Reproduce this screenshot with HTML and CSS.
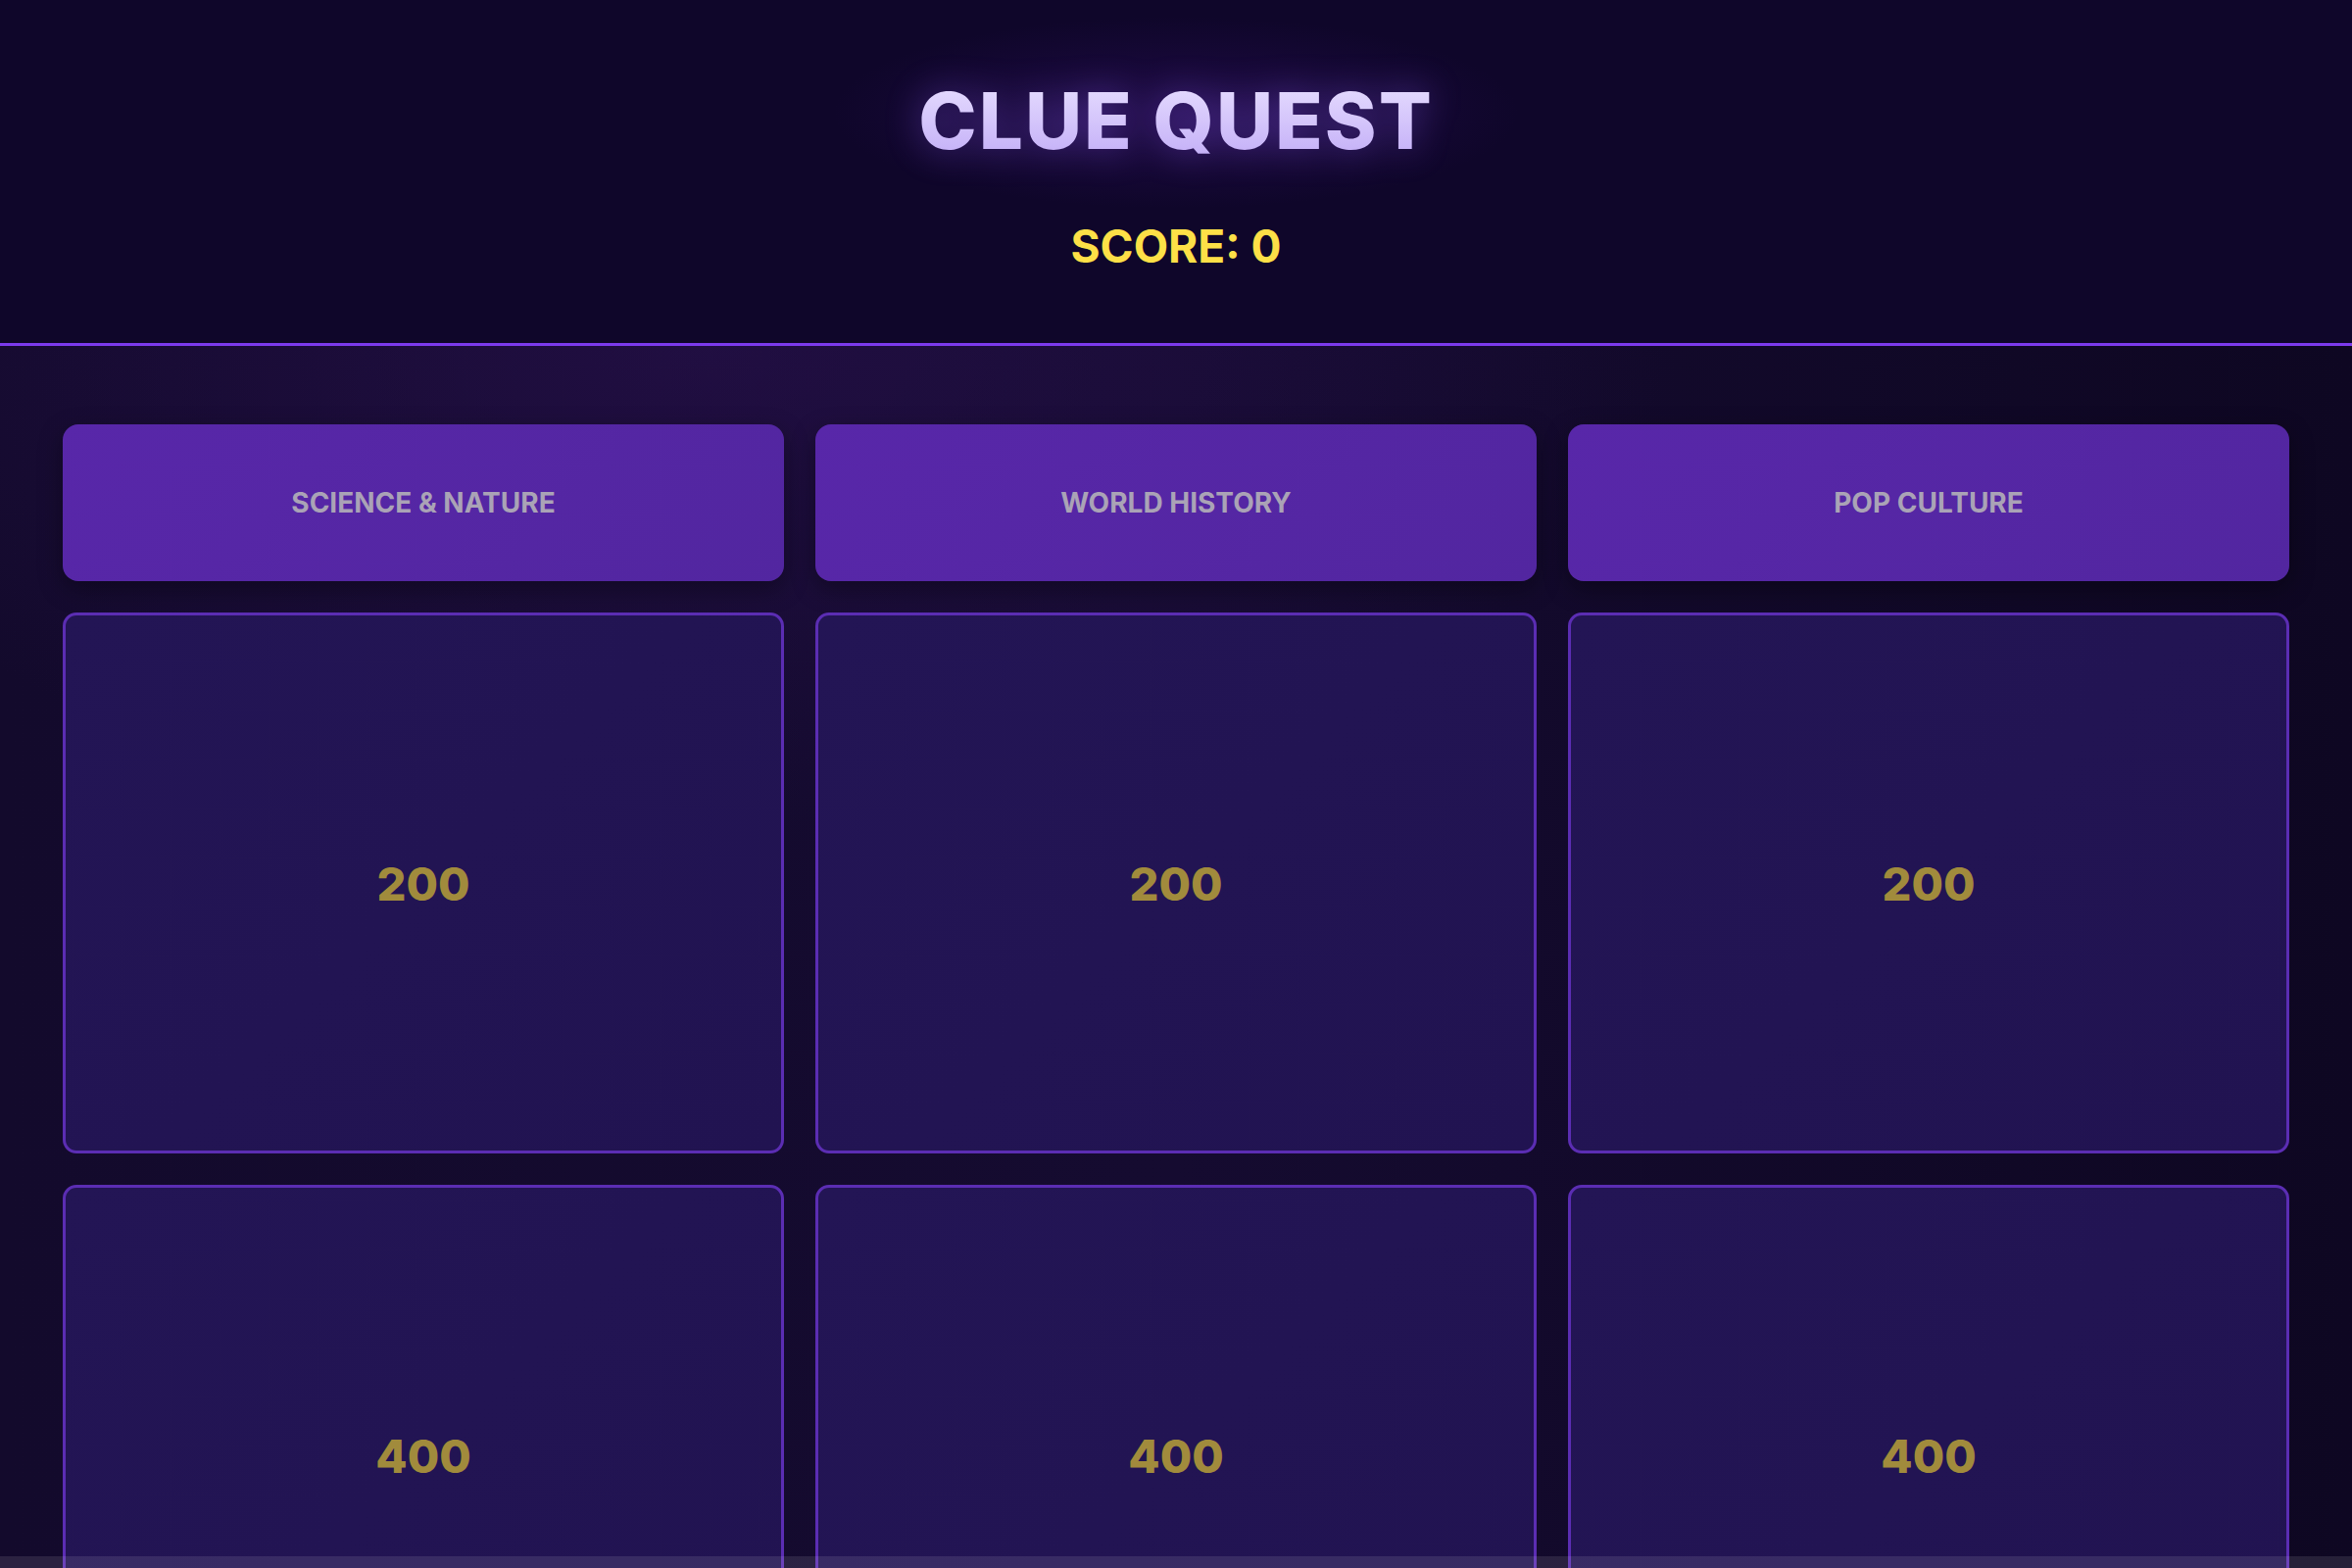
FILE: index.html
```html
<!DOCTYPE html>
<html lang="en">
<head>
<meta charset="utf-8">
<title>Clue Quest</title>
<link rel="stylesheet" href="styles.css">
</head>
<body>
<header class="top">
  <h1 class="title">CLUE QUEST</h1>
  <div class="score">SCORE: 0</div>
</header>
<main class="board">
  <div class="grid">
    <div class="cat">SCIENCE &amp; NATURE</div>
    <div class="cat">WORLD HISTORY</div>
    <div class="cat">POP CULTURE</div>
    <div class="cell">200</div>
    <div class="cell">200</div>
    <div class="cell">200</div>
    <div class="cell">400</div>
    <div class="cell">400</div>
    <div class="cell">400</div>
  </div>
</main>
<div class="bottom-bar"></div>
</body>
</html>
```

FILE: styles.css
```css
* { box-sizing: border-box; }
html, body { margin: 0; padding: 0; }
body {
  background: #100826;
  font-family: Inter, "Liberation Sans", sans-serif;
  color: #fff;
}
.top {
  height: 353px;
  background: radial-gradient(ellipse 500px 140px at 50% 115px, rgba(60, 20, 120, 0.35), rgba(0,0,0,0) 70%), #0f062a;
  border-bottom: 3px solid #7c3aed;
  display: flex;
  flex-direction: column;
  align-items: center;
  padding-top: 83px;
}
.title {
  margin: 0;
  font-size: 80px;
  font-weight: 800;
  letter-spacing: 2px;
  line-height: 1;
  background: linear-gradient(180deg, #e6ddff 0%, #c3aef7 100%);
  -webkit-background-clip: text;
  background-clip: text;
  color: transparent;
  filter: drop-shadow(0 0 18px rgba(139, 92, 246, 0.45));
}
.score {
  margin-top: 65px;
  font-size: 46px;
  font-weight: 700;
  line-height: 1;
  color: #fde047;
}
.board {
  padding: 80px 64px 64px;
  background:
    radial-gradient(ellipse 1400px 700px at 30% 0%, rgba(45, 18, 85, 0.5), rgba(0,0,0,0) 70%),
    linear-gradient(90deg, #130a2c 0%, #150b30 50%, #0e0722 100%);
}
.grid {
  display: grid;
  grid-template-columns: repeat(3, 1fr);
  gap: 32px;
}
.cat {
  height: 160px;
  border-radius: 16px;
  background: linear-gradient(135deg, #5827a9, #5226a0);
  box-shadow: 0 8px 24px rgba(0, 0, 0, 0.35);
  display: flex;
  align-items: center;
  justify-content: center;
  font-size: 28px;
  font-weight: 700;
  color: #aaa3b6;
}
.cell {
  aspect-ratio: 4 / 3;
  border: 3px solid #5b2db3;
  border-radius: 14px;
  background: linear-gradient(135deg, #231555, #211351);
  display: flex;
  align-items: center;
  justify-content: center;
  font-size: 47px;
  font-weight: 800;
  color: #a18b3c;
}
.bottom-bar {
  position: fixed;
  left: 0;
  right: 0;
  bottom: 0;
  height: 12px;
  background: rgba(255, 255, 255, 0.1);
}
```
